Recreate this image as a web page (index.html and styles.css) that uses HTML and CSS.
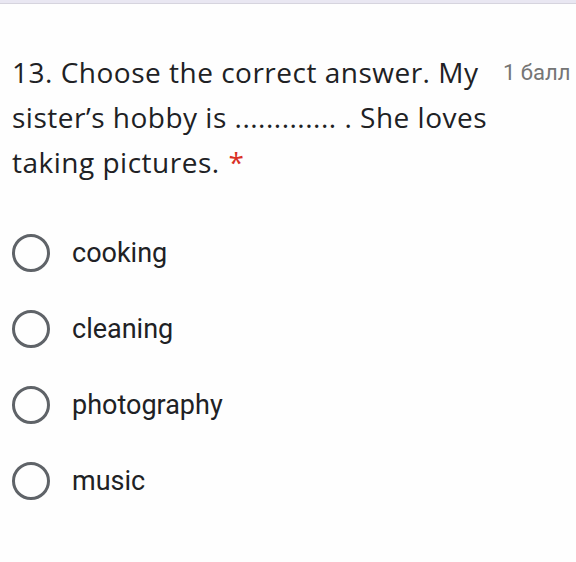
FILE: index.html
```html
<!DOCTYPE html>
<html>
<head>
<meta charset="utf-8">
<link rel="stylesheet" href="styles.css">
</head>
<body>
<div class="topbar"></div>
<div class="card">
  <div class="question">
    <div class="title">13. Choose the correct answer. My sister’s hobby is ............. . She loves taking pictures.<span class="req">*</span></div>
    <div class="points">1 балл</div>
  </div>
  <div class="options">
    <label class="option"><span class="radio"></span><span class="label">cooking</span></label>
    <label class="option"><span class="radio"></span><span class="label">cleaning</span></label>
    <label class="option"><span class="radio"></span><span class="label">photography</span></label>
    <label class="option"><span class="radio"></span><span class="label">music</span></label>
  </div>
</div>
</body>
</html>
```
FILE: styles.css
```css
html, body {
  margin: 0;
  padding: 0;
  background: #fefefe;
  overflow: hidden;
}
.topbar {
  height: 3px;
  background: #e9e7f2;
  border-bottom: 1px solid #d6d4de;
}
.card {
  padding: 46px 0 0 12px;
}
.question {
  display: flex;
  align-items: flex-start;
}
.title {
  width: 484px;
  font-family: "Open Sans", sans-serif;
  font-size: 28px;
  letter-spacing: 0.5px;
  line-height: 45px;
  color: #202124;
}
.req {
  color: #d93025;
  margin-left: 9px;
}
.points {
  font-family: Roboto, sans-serif;
  font-size: 22px;
  color: #757575;
  padding-top: 10px;
  margin-left: 7px;
  white-space: nowrap;
}
.options {
  display: flex;
  flex-direction: column;
  gap: 38px;
  margin-top: 49px;
}
.option {
  display: flex;
  align-items: center;
  height: 38px;
}
.radio {
  width: 32px;
  height: 32px;
  border: 3px solid #5f6368;
  border-radius: 50%;
  flex: none;
}
.label {
  font-family: Roboto, sans-serif;
  font-size: 27px;
  color: #202124;
  margin-left: 22px;
}
```
